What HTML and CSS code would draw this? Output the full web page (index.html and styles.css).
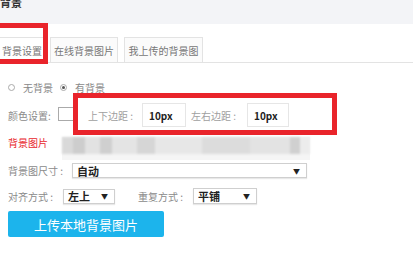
FILE: index.html
```html
<!DOCTYPE html>
<html lang="zh">
<head>
<meta charset="utf-8">
<link rel="stylesheet" href="styles.css">
</head>
<body>
<div class="page">
  <div class="header"><span class="title">背景</span></div>
  <div class="tabs">
    <div class="tab tab-active">背景设置</div>
    <div class="tab tab-2">在线背景图片</div>
    <div class="tab tab-3">我上传的背景图</div>
  </div>
  <div class="content">
    <div class="row radio-row">
      <span class="radio"></span><span class="radio-label">无背景</span>
      <span class="radio radio-on"></span><span class="radio-label">有背景</span>
    </div>
    <div class="row color-row">
      <span class="label label-color">颜色设置:</span>
      <span class="color-box"></span>
      <span class="label label-m1">上下边距 :</span>
      <span class="input input-1">10px</span>
      <span class="label label-m2">左右边距 :</span>
      <span class="input input-2">10px</span>
    </div>
    <div class="row image-row">
      <span class="label label-red">背景图片</span>
      <div class="blur"><div class="mosaic"></div></div>
    </div>
    <div class="row size-row">
      <span class="label label-size">背景图尺寸 :</span>
      <div class="select select-size"><span>自动</span><span class="arrow">▼</span></div>
    </div>
    <div class="row align-row">
      <span class="label label-align">对齐方式 :</span>
      <div class="select select-a"><span>左上</span><span class="arrow">▼</span></div>
      <span class="label label-repeat">重复方式 :</span>
      <div class="select select-r"><span>平铺</span><span class="arrow">▼</span></div>
    </div>
    <div class="button">上传本地背景图片</div>
  </div>
  <div class="mark mark-tab"></div>
  <div class="mark mark-margin"></div>
</div>
</body>
</html>
```

FILE: styles.css
```css
html, body {
  margin: 0;
  padding: 0;
  background: #fff;
}
body {
  font-family: "Noto Sans CJK SC", "Noto Sans", sans-serif;
  width: 413px;
  height: 266px;
  overflow: hidden;
}
.page {
  position: relative;
  width: 413px;
  height: 266px;
}
.header {
  height: 24px;
  background: #f3f4f7;
  overflow: hidden;
}
.title {
  display: block;
  font-size: 11px;
  font-weight: bold;
  color: #333;
  line-height: 12px;
  margin-top: -4px;
}
.tabs {
  display: flex;
  margin-top: 13px;
  height: 25px;
  border-bottom: 1px solid #e3e3e3;
}
.tab {
  box-sizing: border-box;
  height: 26px;
  border: 1px solid #e3e3e3;
  background: #fbfbfb;
  font-size: 10px;
  color: #777;
  display: flex;
  align-items: center;
  justify-content: center;
  margin-right: 6px;
}
.tab-active {
  width: 44px;
  border-left: none;
  background: #fff;
  justify-content: flex-start;
  padding-left: 2px;
}
.tab-2 { width: 68px; }
.tab-3 { width: 79px; }
.content {
  padding-left: 8px;
}
.row {
  display: flex;
  align-items: center;
}
.label {
  font-size: 10px;
  color: #8a8a8a;
  white-space: nowrap;
}
.radio-row {
  margin-top: 16px;
  height: 16px;
}
.radio {
  box-sizing: border-box;
  width: 7px;
  height: 7px;
  border: 1px solid #aaa;
  border-radius: 50%;
  position: relative;
}
.radio-on::after {
  content: "";
  position: absolute;
  left: 1px;
  top: 1px;
  width: 3px;
  height: 3px;
  border-radius: 50%;
  background: #555;
}
.radio-label {
  font-size: 10px;
  color: #888;
  margin-left: 8px;
  margin-right: 7px;
}
.color-row {
  margin-top: 8px;
  height: 24px;
}
.label-color { width: 50px; }
.color-box {
  box-sizing: border-box;
  width: 15px;
  height: 14px;
  border: 1px solid #aaa;
  border-right: none;
  margin-top: -2px;
}
.label-m1 {
  width: 54px;
  margin-left: 15px;
  color: #a0a0a0;
}
.input {
  box-sizing: border-box;
  height: 24px;
  border: 1px solid #e6e6e6;
  font-size: 10px;
  font-weight: bold;
  color: #222;
  display: flex;
  align-items: center;
  padding-left: 6px;
}
.input-1 { width: 44px; }
.label-m2 {
  width: 56px;
  margin-left: 5px;
  color: #a0a0a0;
}
.input-2 { width: 42px; }
.image-row {
  margin-top: 10px;
  height: 23px;
  align-items: flex-start;
}
.label-red {
  color: #e8262c;
  width: 54px;
  line-height: 12px;
}
.blur {
  width: 248px;
  height: 23px;
  background: #f5f5f5;
}
.mosaic {
  height: 17px;
  background: linear-gradient(to right,
    #d9d9d9 0, #d9d9d9 11px,
    #cdcdcd 11px, #cdcdcd 23px,
    #e2e2e2 23px, #e2e2e2 38px,
    #cfcfcf 38px, #cfcfcf 50px,
    #e4e4e4 50px, #e4e4e4 75px,
    #d6d6d6 75px, #d6d6d6 93px,
    #e7e7e7 93px, #e7e7e7 140px,
    #dcdcdc 140px, #dcdcdc 188px,
    #e3e3e3 188px, #e3e3e3 228px,
    #d0d0d0 228px, #d0d0d0 238px,
    #ececec 238px);
  filter: blur(1px);
}
.size-row {
  margin-top: 3px;
  height: 15px;
}
.label-size { width: 64px; }
.select {
  box-sizing: border-box;
  height: 15px;
  border: 1px solid #cfcfcf;
  display: flex;
  align-items: center;
  justify-content: space-between;
  padding: 0 6px 0 4px;
  font-size: 11px;
  font-weight: bold;
  color: #222;
  box-shadow: 0 1px 1px #e8e8e8;
}
.arrow {
  font-size: 7px;
  color: #222;
}
.select-size { width: 235px; }
.align-row {
  margin-top: 10px;
  height: 16px;
}
.label-align { width: 55px; }
.select-a { width: 52px; height: 15px; }
.label-repeat {
  width: 55px;
  margin-left: 23px;
}
.select-r { width: 64px; height: 16px; }
.button {
  margin-top: 7px;
  width: 156px;
  height: 26px;
  background: #1cb4ec;
  border-radius: 2px;
  color: #fff;
  font-size: 13px;
  display: flex;
  align-items: center;
  justify-content: center;
}
.mark {
  position: absolute;
  box-sizing: border-box;
  border: 5px solid #e9242b;
}
.mark-tab {
  left: -10px;
  top: 23px;
  width: 58px;
  height: 41px;
}
.mark-margin {
  left: 73px;
  top: 93px;
  width: 264px;
  height: 42px;
}
```
